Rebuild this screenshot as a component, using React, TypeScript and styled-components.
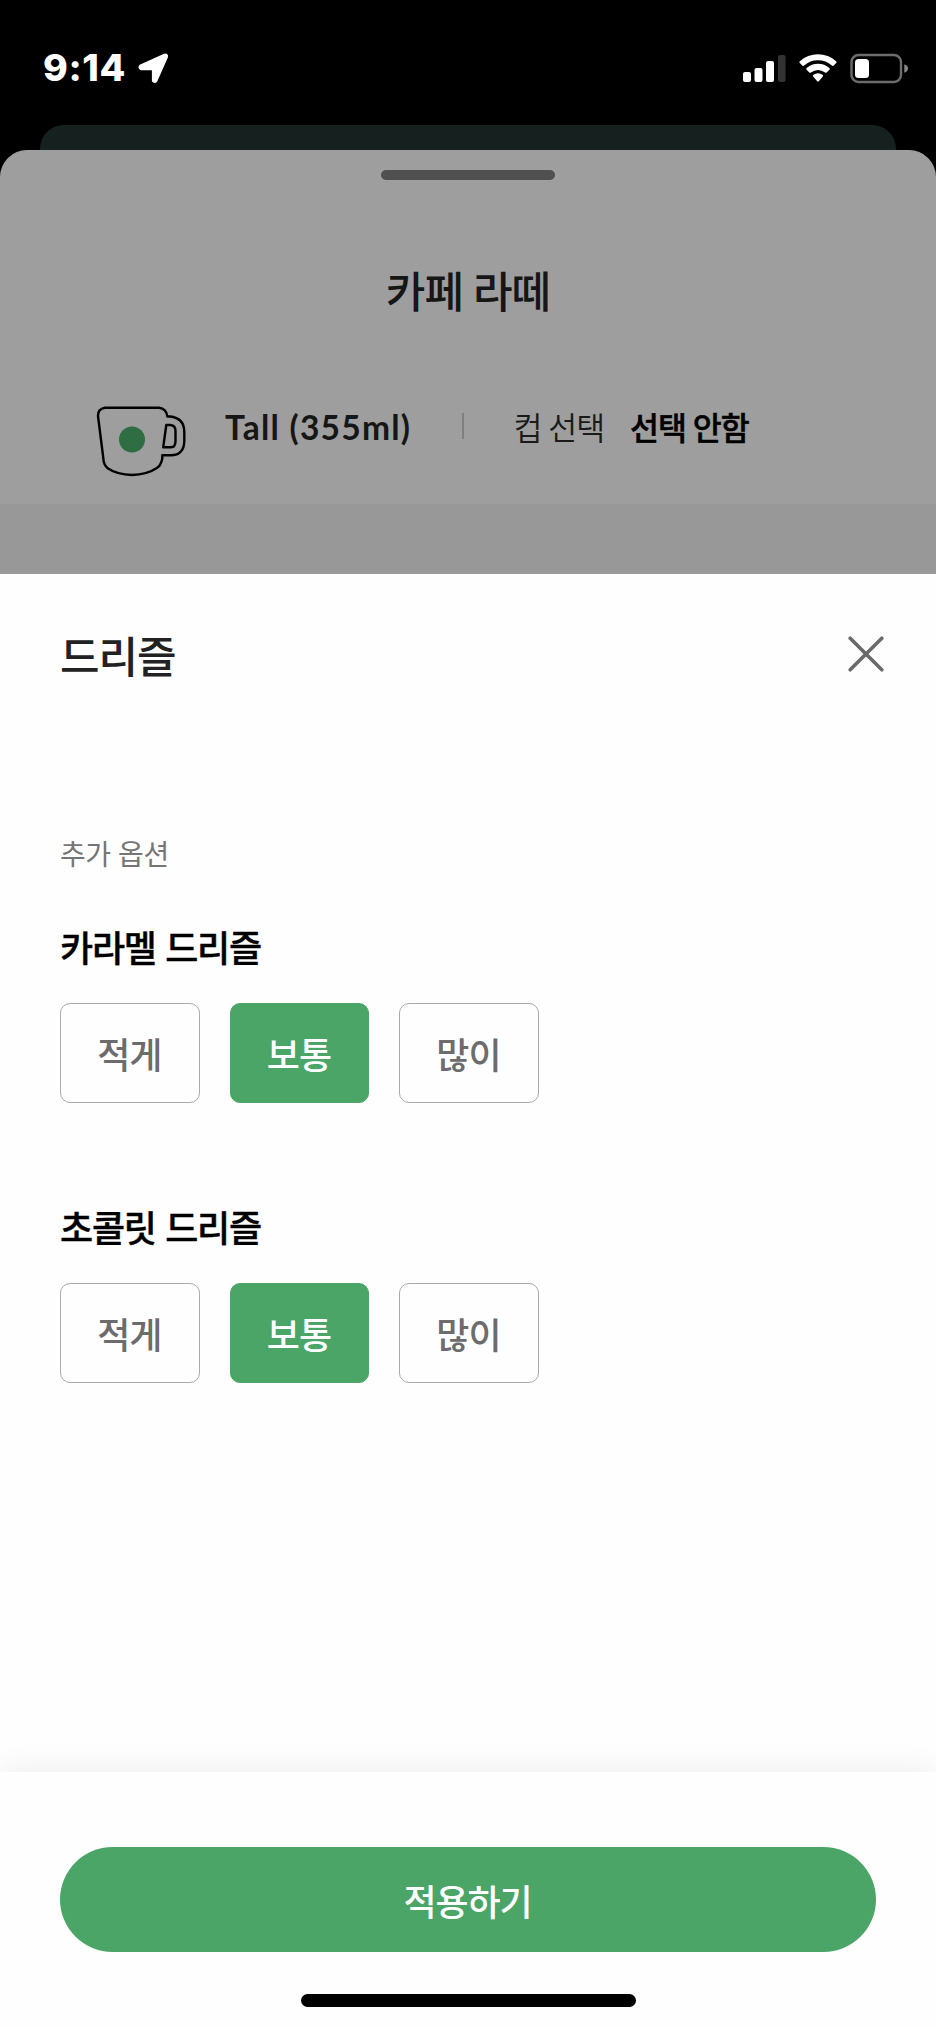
import React, { useState } from "react";
import styled, { createGlobalStyle } from "styled-components";

const GlobalStyle = createGlobalStyle`
  * { box-sizing: border-box; }
  body {
    margin: 0;
    background: #000;
    font-family: "Noto Sans CJK KR", "Noto Sans", sans-serif;
  }
  button { font: inherit; padding: 0; margin: 0; cursor: pointer; }
`;

const Screen = styled.div`
  display: flex;
  flex-direction: column;
  width: 936px;
  height: 2027px;
  overflow: hidden;
  background: #000;
`;

const StatusBar = styled.header`
  display: flex;
  justify-content: space-between;
  height: 125px;
  padding: 0 26px 0 43px;
`;

const StatusLeft = styled.div`
  display: flex;
  align-items: center;
  gap: 11px;
  height: 136px;
`;

const Clock = styled.time`
  width: 84px;
  font-family: Inter, sans-serif;
  font-size: 37.5px;
  font-weight: 800;
  line-height: 44px;
  letter-spacing: 0.6px;
  white-space: nowrap;
  color: #fff;
`;

const StatusRight = styled.div`
  display: flex;
  align-items: center;
  height: 136px;
`;

const BackCard = styled.div`
  flex: none;
  height: 25px;
  margin: 0 40px;
  border-radius: 24px 24px 0 0;
  background: #16201e;
`;

const DrinkSheet = styled.section`
  display: flex;
  flex-direction: column;
  flex: none;
  height: 424px;
  border-radius: 27px 27px 0 0;
  background: #9e9e9e;
  overflow: hidden;
`;

const Grabber = styled.div`
  flex: none;
  align-self: center;
  width: 174px;
  height: 10px;
  margin-top: 20px;
  border-radius: 5px;
  background: #505050;
`;

const DrinkName = styled.h1`
  margin: 79px 0 0;
  font-size: 43px;
  font-weight: 500;
  line-height: 60px;
  letter-spacing: -0.9px;
  word-spacing: 1px;
  text-align: center;
  color: #161616;
`;

const CupRow = styled.div`
  display: flex;
  flex: none;
  height: 185px;
  padding: 85px 0 0 95px;
`;

const CupText = styled.span<{ $weight: number; $color: string; $gap: number }>`
  margin: 2px 0 0 ${(p) => p.$gap}px;
  font-size: 31.5px;
  font-weight: ${(p) => p.$weight};
  line-height: 40px;
  letter-spacing: -1.1px;
  word-spacing: 1px;
  white-space: nowrap;
  color: ${(p) => p.$color};
  -webkit-text-stroke: ${(p) => (p.$weight > 400 ? "0.5px" : "0")} ${(p) => p.$color};
`;

const CupSize = styled.span`
  width: 186px;
  margin: 3px 0 0 38px;
  font-family: Lato, sans-serif;
  font-size: 33.5px;
  font-weight: 700;
  line-height: 40px;
  letter-spacing: 1.25px;
  white-space: nowrap;
  color: #161616;
`;

const Divider = styled.i`
  width: 2px;
  height: 26px;
  margin: 9px 0 0 50.5px;
  background: #7f7f7f;
`;

const Band = styled.div`
  flex: 1;
  background: #989898;
`;

const Panel = styled.main`
  display: flex;
  flex-direction: column;
  flex: 1;
  background: #fefefe;
`;

const PanelHeader = styled.div`
  display: flex;
  align-items: center;
  justify-content: space-between;
  height: 160px;
  padding: 0 52px 0 60px;
`;

const PanelTitle = styled.h2`
  margin: 0;
  font-size: 43px;
  font-weight: 500;
  line-height: 60px;
  letter-spacing: -1.1px;
  color: #222;
`;

const CloseButton = styled.button`
  display: flex;
  border: 0;
  background: none;
`;

const Options = styled.div`
  flex: 1;
  padding: 99px 60px 0;
`;

const GroupLabel = styled.p`
  margin: 0;
  font-size: 28px;
  font-weight: 400;
  line-height: 40px;
  letter-spacing: -0.4px;
  word-spacing: 1.5px;
  color: #757575;
`;

const Option = styled.section`
  height: 279.7px;
  padding-top: 53px;
`;

const OptionName = styled.h3`
  margin: 0;
  font-size: 36px;
  font-weight: 500;
  line-height: 40px;
  letter-spacing: -1.2px;
  word-spacing: 2.5px;
  color: #000;
  -webkit-text-stroke: 0.4px #000;
`;

const Choices = styled.div`
  display: flex;
  gap: 30px;
  margin-top: 37px;
`;

const Choice = styled.button<{ $active: boolean }>`
  width: 139.6px;
  height: 100px;
  padding: 0 1px 0 0;
  border: 1.5px solid ${(p) => (p.$active ? "#4ba567" : "#aaa")};
  border-radius: 10px;
  background: ${(p) => (p.$active ? "#4ba567" : "#fefefe")};
  color: ${(p) => (p.$active ? "#fff" : "#6c6c6c")};
  font-size: 36px;
  font-weight: 500;
  letter-spacing: -1px;
`;

const Footer = styled.footer`
  display: flex;
  flex-direction: column;
  align-items: center;
  height: 255px;
  padding-top: 75px;
  background: #fefefe;
  box-shadow: 0 0 30px rgba(0, 0, 0, 0.08);
`;

const ApplyButton = styled.button`
  width: 816px;
  height: 105px;
  padding-right: 1px;
  border: 0;
  border-radius: 53px;
  background: #4ba567;
  color: #fff;
  font-size: 36px;
  font-weight: 500;
  letter-spacing: -1.1px;
`;

const HomeIndicator = styled.div`
  width: 335px;
  height: 13px;
  margin-top: 42px;
  border-radius: 7px;
  background: #000;
`;

const LocationIcon = () => (
  <svg width="31" height="31" viewBox="0 0 31 31">
    <path
      d="M2 12.5 L26.3 1.4 Q30 0.4 29.2 4.3 L18.6 28.2 Q16.6 30.3 14.6 28 V17.2 Q14.4 16.6 13.7 16.5 H2.8 Q0 14.6 2 12.5Z"
      fill="#fff"
      stroke="#fff"
      strokeWidth="1.4"
      strokeLinejoin="round"
    />
  </svg>
);

const StatusIcons = () => (
  <svg width="168" height="32" viewBox="0 0 168 32">
    <g fill="#fff">
      <rect x="1" y="20" width="8" height="10" rx="2" />
      <rect x="12.5" y="16" width="8" height="14" rx="2" />
      <rect x="24" y="9" width="8" height="21" rx="2" />
      <rect x="36" y="3" width="7.6" height="27" rx="2" fill="#333" />
      <path d="M57.8 9.2 A27.5 27.5 0 0 1 94.2 9.2 Q95 10.2 94.2 11 L91.5 13.7 Q90.7 14.2 89.9 13.6 A21 21 0 0 0 62.1 13.6 Q61.3 14.2 60.5 13.7 L57.8 11 Q57 10.2 57.8 9.2Z" />
      <path d="M64.6 16 A17.5 17.5 0 0 1 87.4 16 Q88.2 17 87.4 17.8 L84.6 20.5 Q83.8 21.1 83 20.5 A11 11 0 0 0 69 20.5 Q68.2 21.1 67.4 20.5 L64.6 17.8 Q63.8 17 64.6 16Z" />
      <path d="M71.2 23 A8.5 8.5 0 0 1 80.8 23 Q81.6 23.8 80.8 24.6 L76.8 29.3 Q76 30.1 75.2 29.3 L71.2 24.6 Q70.4 23.8 71.2 23Z" />
      <rect x="113" y="7" width="14" height="19" rx="3.5" />
    </g>
    <rect x="109.5" y="3" width="49.5" height="27" rx="7" fill="none" stroke="#6c6c6c" strokeWidth="2.4" />
    <path d="M162.3 12.3 Q166 13.6 166 16.4 Q166 19.2 162.3 20.7Z" fill="#888" />
  </svg>
);

const MugIcon = () => (
  <svg width="92" height="74" viewBox="0 0 92 74">
    <g fill="none" stroke="#000" strokeWidth="2.4" strokeLinejoin="round">
      <path d="M10 3.7 H64 Q71.5 4.5 72.3 12.5 H75 Q89.3 14 89.3 28 V37 Q89 51 76 51.3 H67.3 V54.5 Q66 62 61 64.5 Q52 70.5 37 71 Q22 70.5 13 64.5 Q8.5 61 8.3 54 L3 12 Q2.5 5 10 3.7Z" />
      <path d="M71.3 21 H75.5 Q80.5 21.5 80.5 27 V37 Q80.5 43.2 76 43.3 H68.2Z" />
    </g>
    <circle cx="37" cy="35.5" r="13" fill="#2f6d43" />
  </svg>
);

const CloseIcon = () => (
  <svg width="36" height="36" viewBox="0 0 36 36">
    <path d="M2.2 2.2 L33.8 33.8 M33.8 2.2 L2.2 33.8" stroke="#6a6a6a" strokeWidth="3.6" strokeLinecap="round" />
  </svg>
);

const amounts = ["적게", "보통", "많이"];
const drizzles = ["카라멜 드리즐", "초콜릿 드리즐"];

function DrizzleOption({ name }: { name: string }) {
  const [selected, setSelected] = useState("보통");
  return (
    <Option>
      <OptionName>{name}</OptionName>
      <Choices>
        {amounts.map((amount) => (
          <Choice key={amount} $active={amount === selected} onClick={() => setSelected(amount)}>
            {amount}
          </Choice>
        ))}
      </Choices>
    </Option>
  );
}

export default function App() {
  return (
    <>
      <GlobalStyle />
      <Screen>
        <StatusBar>
          <StatusLeft>
            <Clock>9:14</Clock>
            <LocationIcon />
          </StatusLeft>
          <StatusRight>
            <StatusIcons />
          </StatusRight>
        </StatusBar>
        <BackCard />
        <DrinkSheet>
          <Grabber />
          <DrinkName>카페 라떼</DrinkName>
          <CupRow>
            <MugIcon />
            <CupSize>Tall (355ml)</CupSize>
            <Divider />
            <CupText $weight={350} $color="#1a1a1a" $gap={50}>컵 선택</CupText>
            <CupText $weight={500} $color="#000" $gap={26}>선택 안함</CupText>
          </CupRow>
          <Band />
        </DrinkSheet>
        <Panel>
          <PanelHeader>
            <PanelTitle>드리즐</PanelTitle>
            <CloseButton aria-label="닫기">
              <CloseIcon />
            </CloseButton>
          </PanelHeader>
          <Options>
            <GroupLabel>추가 옵션</GroupLabel>
            {drizzles.map((name) => (
              <DrizzleOption key={name} name={name} />
            ))}
          </Options>
          <Footer>
            <ApplyButton>적용하기</ApplyButton>
            <HomeIndicator />
          </Footer>
        </Panel>
      </Screen>
    </>
  );
}
